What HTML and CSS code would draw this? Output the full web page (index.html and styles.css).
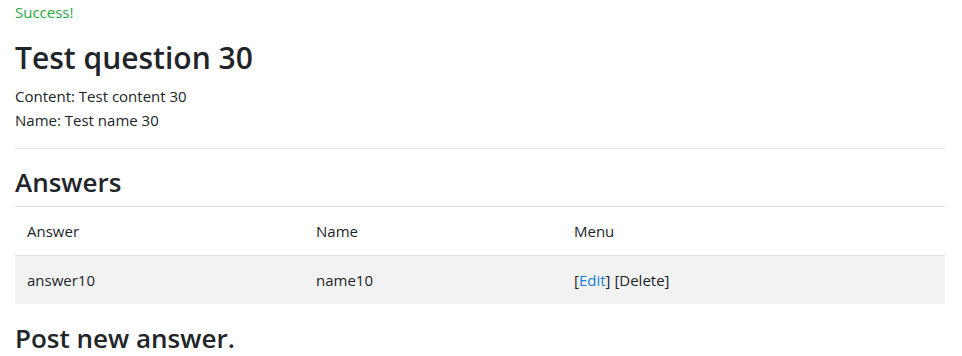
FILE: index.html
```html
<!DOCTYPE html>
<html lang="en">

<head>
    <meta charset="UTF-8">
    <meta name="viewport" content="width=device-width, initial-scale=1.0">
    <title>Test question 30</title>
    <link rel="stylesheet" href="styles.css">
</head>

<body>
    <div class="container">
        <div class="status-success">Success!</div>

        <h1 class="question-title">Test question 30</h1>
        <p class="question-field">Content: Test content 30</p>
        <p class="question-field">Name: Test name 30</p>

        <hr class="divider">

        <h2 class="section-title">Answers</h2>
        <table class="answers-table">
            <colgroup>
                <col class="col-answer">
                <col class="col-name">
                <col>
            </colgroup>
            <thead>
                <tr>
                    <th>Answer</th>
                    <th>Name</th>
                    <th>Menu</th>
                </tr>
            </thead>
            <tbody>
                <tr>
                    <td>answer10</td>
                    <td>name10</td>
                    <td>[<a href="#" class="link">Edit</a>] [Delete]</td>
                </tr>
            </tbody>
        </table>

        <h2 class="section-title">Post new answer.</h2>
    </div>
</body>

</html>
```

FILE: styles.css
```css
* {
    box-sizing: border-box;
}

body {
    margin: 0;
    background: #fff;
    color: #212529;
    font-family: "Open Sans", "Noto Sans", sans-serif;
    font-size: 15px;
    line-height: 24px;
}

.container {
    padding: 0 15px;
    width: 960px;
}

.status-success {
    color: #28a745;
}

.question-title {
    font-size: 30px;
    font-weight: 600;
    line-height: 40px;
    margin: 14px 0 6px;
}

.question-field {
    margin: 0;
}

.divider {
    margin: 16px 0;
    border: 0;
    border-top: 1px solid #e2e2e8;
}

.section-title {
    font-size: 26px;
    font-weight: 600;
    line-height: 34px;
    margin: 0 0 7px;
}

.answers-table {
    width: 100%;
    border-collapse: collapse;
    table-layout: fixed;
    margin-bottom: 17px;
}

.col-answer {
    width: 289px;
}

.col-name {
    width: 258px;
}

.answers-table th,
.answers-table td {
    padding: 12px;
    text-align: left;
    font-weight: 400;
    border-top: 1px solid #dee2e6;
}

.answers-table tbody tr {
    background: #f2f2f2;
}

.link {
    color: #1a7fe0;
    text-decoration: none;
}
```
